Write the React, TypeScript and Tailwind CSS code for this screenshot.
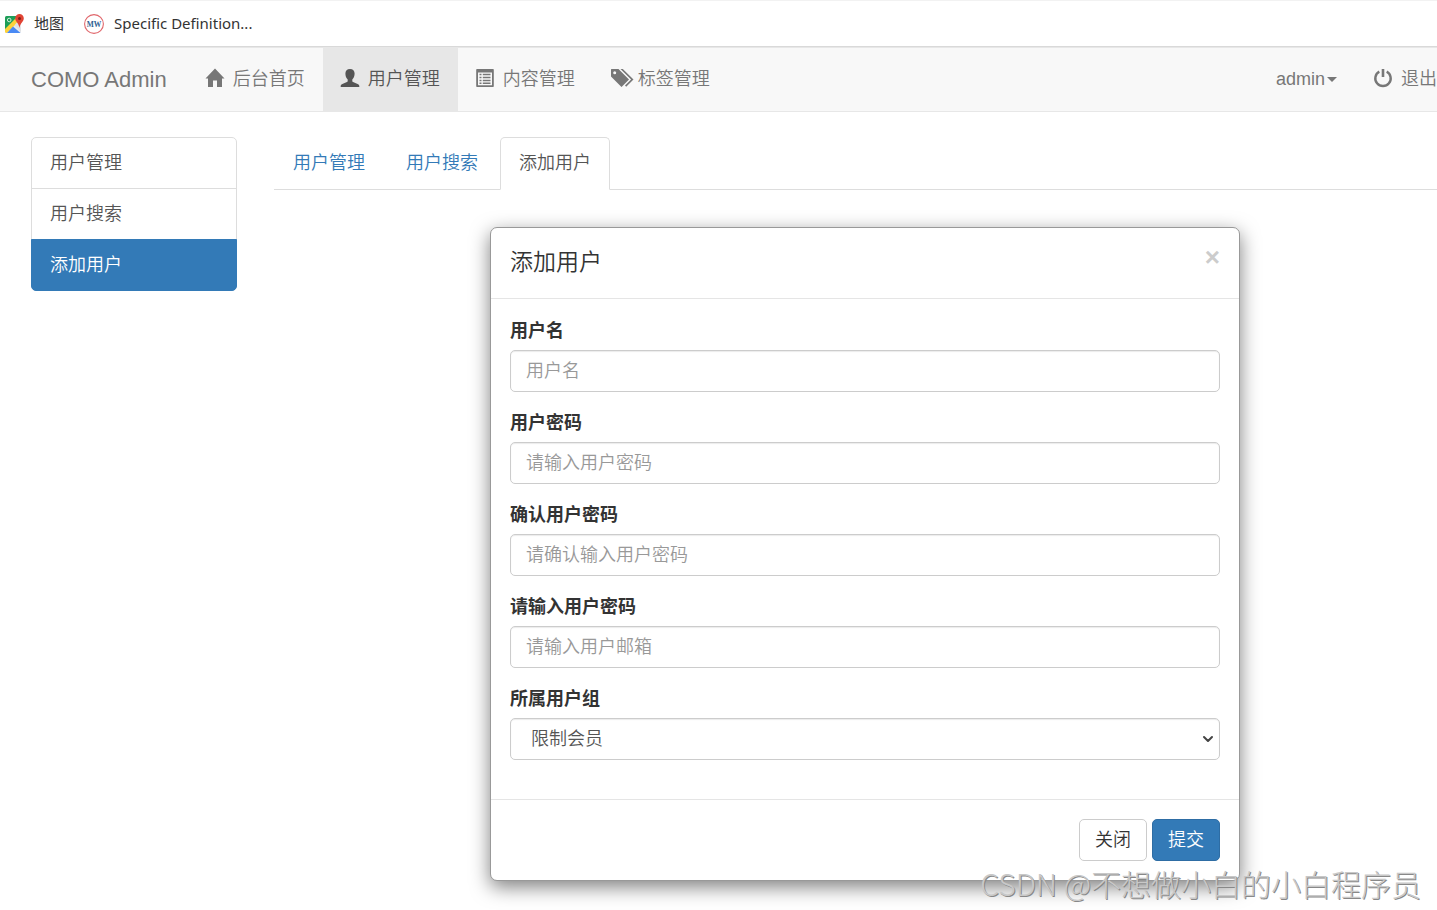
import type { ReactNode } from 'react';
import clsx from 'clsx';
import { ChevronDown } from 'lucide-react';

function MapsIcon() {
  return (
    <svg viewBox="0 0 20 20" className="w-5 h-5" aria-hidden="true">
      <rect x="1" y="2" width="16" height="17" rx="1.5" fill="#e8eaed" />
      <path d="M1 3.5A1.5 1.5 0 0 1 2.5 2H15L1 17z" fill="#1e9e58" />
      <path d="M1 15L13 3l3 3L3 19H2.500A1.500 1.500 0 0 1 1 17.500z" fill="#fdd23b" />
      <path d="M9 12.500L16.500 19H3z" fill="#4a8af4" />
      <path d="M11 10.500l2-2 4 5V18l-6-6z" fill="#dfe1e5" />
      <circle cx="5.200" cy="6" r="1.800" fill="none" stroke="#e6f4ea" strokeWidth="0.900" />
      <path d="M15.500 0a4.300 4.300 0 0 0-4.300 4.300c0 3.200 3.600 4.800 4.300 9.700.7-4.900 4.300-6.500 4.300-9.700A4.300 4.300 0 0 0 15.500 0z" fill="#e14434" />
      <circle cx="15.500" cy="4.500" r="1.500" fill="#7a2018" />
    </svg>
  );
}

function HomeIcon() {
  return (
    <svg viewBox="0 0 18 18" className="w-[18px] h-[18px] overflow-visible" fill="currentColor" aria-hidden="true">
      <path d="M9 -.5L18.500 9.500H16V18h-5v-6.500H7V18H2V9.500H-.5z" />
    </svg>
  );
}

function UserIcon() {
  return (
    <svg viewBox="0 0 18 18" className="w-[18px] h-[18px] overflow-visible" fill="currentColor" aria-hidden="true">
      <path d="M9 0c3 0 4.600 1.700 4.600 4.600 0 2.500-.8 4.700-2.300 6v1.300c0 .6.300.9.800 1.100l4.500 1.900c1.200.5 1.700 1.100 1.700 2V18H-.3v-1.100c0-.9.5-1.500 1.700-2L5.900 13c.5-.2.800-.5.800-1.100v-1.300c-1.500-1.300-2.300-3.500-2.300-6C4.400 1.700 6 0 9 0z" />
    </svg>
  );
}

function ListIcon() {
  return (
    <svg viewBox="0 0 18 18" className="w-[18px] h-[18px]" fill="currentColor" aria-hidden="true">
      <path fillRule="evenodd" d="M1 0h16a.8.800 0 0 1 .8.800v16.400a.8.800 0 0 1-.8.800H1a.8.800 0 0 1-.8-.8V.8A.8.800 0 0 1 1 0zM2 3.500v12.700h14V3.500z" />
      <path d="M3.500 4.800h2v1.500h-2zM3.500 7.800h2v1.500h-2zM3.500 10.800h2v1.500h-2zM3.500 13.500h2V15h-2zM6.800 4.800h7.700v1.500H6.800zM6.800 7.800h7.700v1.500H6.800zM6.800 10.800h7.700v1.500H6.800zM6.800 13.500h7.700V15H6.800z" />
    </svg>
  );
}

function TagsIcon() {
  return (
    <svg viewBox="0 0 18 18" className="w-[18px] h-[18px] overflow-visible" fill="currentColor" aria-hidden="true">
      <path fillRule="evenodd" d="M.5 0h7L18 10.500 10.500 18 0 7.500V.5A.5.500 0 0 1 .5 0zM3.700 2.200a1.500 1.500 0 1 0 0 3 1.500 1.500 0 0 0 0-3z" />
      <path d="M9.500 0h2.300l10.700 10.500-7.300 7.300-1.200-1.200 6.100-6.100z" />
    </svg>
  );
}

function PowerIcon() {
  return (
    <svg viewBox="0 0 18 18" className="w-[18px] h-[18px] overflow-visible" fill="none" stroke="currentColor" aria-hidden="true">
      <path d="M5.300 2.600a7.700 7.700 0 1 0 7.400 0" strokeWidth="2.400" />
      <path d="M9 0v8" strokeWidth="2.600" />
    </svg>
  );
}

const navItems = [
  { label: '后台首页', icon: <HomeIcon /> },
  { label: '用户管理', icon: <UserIcon />, active: true },
  { label: '内容管理', icon: <ListIcon /> },
  { label: '标签管理', icon: <TagsIcon /> },
];

const userPages = [
  { label: '用户管理' },
  { label: '用户搜索' },
  { label: '添加用户', active: true },
];

const fields = [
  { id: 'username', label: '用户名', placeholder: '用户名', type: 'text' },
  { id: 'password', label: '用户密码', placeholder: '请输入用户密码', type: 'password' },
  { id: 'confirm', label: '确认用户密码', placeholder: '请确认输入用户密码', type: 'password' },
  { id: 'email', label: '请输入用户密码', placeholder: '请输入用户邮箱', type: 'email' },
];

const controlClass =
  'block w-full h-[42px] rounded-[5px] border border-[#ccc] bg-white text-[#555] font-[350] shadow-[inset_0_1px_1px_rgba(0,0,0,0.08)] placeholder:text-[#999]';

function BookmarkBar() {
  return (
    <div className="flex items-center gap-5 h-[47px] px-1 border-t border-t-[#f2f2f2] border-b border-b-[#d9d9d9] font-['Noto_Sans','Noto_Sans_CJK_SC',sans-serif] font-normal text-[15px] text-[#333]">
      <a href="#" className="flex items-center gap-[10px]">
        <MapsIcon />
        地图
      </a>
      <a href="#" className="flex items-center gap-[10px]">
        <svg viewBox="0 0 20 20" className="w-5 h-5" aria-hidden="true">
          <circle cx="10" cy="10" r="9.400" fill="#fff" stroke="#e0666b" strokeWidth="1.100" />
          <text x="10" y="12.500" textAnchor="middle" fontSize="7.500" fontWeight="700" fontFamily="Liberation Serif, serif" fill="#2f5f93">
            MW
          </text>
        </svg>
        Specific Definition...
      </a>
    </div>
  );
}

function NavLink({ icon, label, active }: { icon: ReactNode; label: string; active?: boolean }) {
  return (
    <a
      href="#"
      className={clsx('flex items-center gap-[9px] px-[18px] whitespace-nowrap', active ? 'bg-[#e7e7e7] text-[#555]' : 'text-[#777]')}
    >
      <span className="mb-1">{icon}</span>
      {label}
    </a>
  );
}

function Navbar() {
  return (
    <nav className="flex h-[65px] border-y border-[#e7e7e7] bg-[#f8f8f8] text-[#777]">
      <a href="#" className="flex items-center pl-[31px] pr-[21px] text-[22px]">
        COMO Admin
      </a>
      {navItems.map((item) => (
        <NavLink key={item.label} {...item} />
      ))}
      <div className="flex ml-auto">
        <button type="button" className="flex items-center gap-[2px] px-[18px]">
          admin
          <span className="border-x-5 border-x-transparent border-t-5 border-t-[#777]"></span>
        </button>
        <a href="#" className="flex items-center gap-[9px] pl-[19px] whitespace-nowrap">
          <span className="mb-1">
            <PowerIcon />
          </span>
          退出
        </a>
      </div>
    </nav>
  );
}

function Sidebar() {
  return (
    <aside className="w-[206px] shrink-0">
      <ul>
        {userPages.map((page) => (
          <li key={page.label} className="group -mb-px">
            <a
              href="#"
              className={clsx(
                'block py-3 px-[18px] border leading-[26px] group-first:rounded-t-[5px] group-last:rounded-b-[5px]',
                page.active ? 'border-[#337ab7] bg-[#337ab7] text-white' : 'border-[#ddd] text-[#555]'
              )}
            >
              {page.label}
            </a>
          </li>
        ))}
      </ul>
    </aside>
  );
}

function Tabs() {
  return (
    <ul className="flex gap-[3px] border-b border-[#ddd]">
      {userPages.map((page) => (
        <li key={page.label} className="-mb-px">
          <a
            href="#"
            className={clsx(
              'block py-3 px-[18px] border rounded-t-[5px] leading-[27px]',
              page.active ? 'bg-white border-[#ddd] border-b-white text-[#555]' : 'border-transparent text-[#337ab7]'
            )}
          >
            {page.label}
          </a>
        </li>
      ))}
    </ul>
  );
}

function AddUserDialog() {
  return (
    <div
      role="dialog"
      aria-labelledby="dialog-title"
      className="w-full max-w-[750px] rounded-[7px] border border-[#999] bg-white shadow-[0_6px_19px_rgba(0,0,0,0.5)]"
    >
      <div className="flex items-start justify-between h-[71px] px-[19px] pt-[18px] border-b border-[#e5e5e5]">
        <h4 id="dialog-title" className="text-[23px] leading-[32px] text-[#333]">
          添加用户
        </h4>
        <button type="button" aria-label="Close" className="text-[26px] leading-[22px] font-bold text-[#ccc]">
          ×
        </button>
      </div>
      <form>
        <div className="px-[19px] py-5">
          {fields.map((field) => (
            <div key={field.id} className="mb-[19px]">
              <label htmlFor={field.id} className="block mb-[6px] leading-[25px] font-bold text-[#333]">
                {field.label}
              </label>
              <input id={field.id} type={field.type} placeholder={field.placeholder} className={clsx(controlClass, 'px-[15px]')} />
            </div>
          ))}
          <div className="mb-[19px]">
            <label htmlFor="group" className="block mb-[6px] leading-[25px] font-bold text-[#333]">
              所属用户组
            </label>
            <div className="relative">
              <select id="group" className={clsx(controlClass, 'appearance-none px-5')}>
                <option>限制会员</option>
              </select>
              <ChevronDown className="absolute right-1 inset-y-0 my-auto size-4 text-[#444] pointer-events-none" strokeWidth={3} />
            </div>
          </div>
        </div>
        <div className="flex justify-end gap-[5px] p-[19px] border-t border-[#e5e5e5]">
          <button type="button" className="h-[42px] px-[15px] rounded-[5px] border border-[#ccc] bg-white text-[#333]">
            关闭
          </button>
          <button type="submit" className="h-[42px] px-[15px] rounded-[5px] border border-[#2e6da4] bg-[#337ab7] text-white">
            提交
          </button>
        </div>
      </form>
    </div>
  );
}

export default function App() {
  return (
    <div className="relative min-h-screen overflow-hidden bg-white font-['Liberation_Sans','Noto_Sans_CJK_SC',sans-serif] text-[18px] font-[350]">
      <BookmarkBar />
      <Navbar />
      <div className="flex gap-[37px] pt-[25px] pl-[31px]">
        <Sidebar />
        <main className="flex-1 min-w-0">
          <Tabs />
          <div className="flex justify-center pt-[37px] pl-[19px]">
            <AddUserDialog />
          </div>
        </main>
      </div>
      <p className="absolute right-4 bottom-1 leading-[46px] text-[30px] font-['Noto_Sans_CJK_SC',sans-serif] font-light text-[#c8c8c8] [text-shadow:1px_1px_0_#888] whitespace-nowrap pointer-events-none">
        CSDN @不想做小白的小白程序员
      </p>
    </div>
  );
}
